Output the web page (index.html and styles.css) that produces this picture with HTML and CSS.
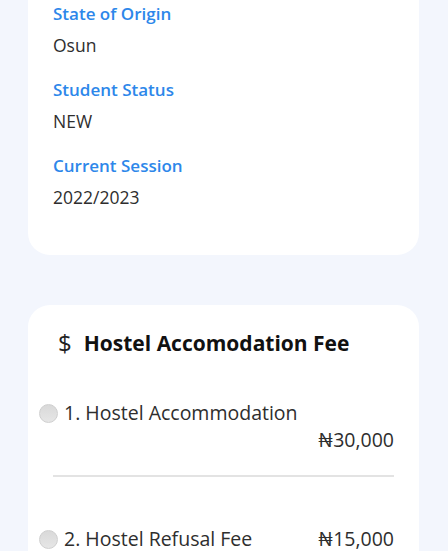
FILE: index.html
```html
<!DOCTYPE html>
<html lang="en">
<head>
    <meta charset="UTF-8">
    <meta name="viewport" content="width=device-width, initial-scale=1.0">
    <title>Student Profile</title>
    <link rel="stylesheet" href="styles.css">
</head>
<body>
    <div class="page">
        <div class="card info-card">
            <div class="field">
                <div class="label">State of Origin</div>
                <div class="value">Osun</div>
            </div>
            <div class="field">
                <div class="label">Student Status</div>
                <div class="value">NEW</div>
            </div>
            <div class="field">
                <div class="label">Current Session</div>
                <div class="value">2022/2023</div>
            </div>
        </div>

        <div class="card fee-card">
            <div class="fee-title">
                <span class="dollar">$</span>
                <span>Hostel Accomodation Fee</span>
            </div>

            <label class="fee-item wrap">
                <span class="radio"></span>
                <span class="fee-name">1. Hostel Accommodation</span>
                <span class="fee-price">₦30,000</span>
            </label>

            <div class="divider"></div>

            <label class="fee-item">
                <span class="radio"></span>
                <span class="fee-name">2. Hostel Refusal Fee</span>
                <span class="fee-price">₦15,000</span>
            </label>
        </div>
    </div>
</body>
</html>
```

FILE: styles.css
```css
:root {
    --bg-color: #f3f6fd;
    --card-color: #ffffff;
    --label-color: #2d87ea;
    --text-color: #2e2e2e;
}

* {
    margin: 0;
    padding: 0;
    box-sizing: border-box;
}

body {
    font-family: "Open Sans", "Lato", sans-serif;
    background-color: var(--bg-color);
    color: var(--text-color);
    min-height: 100vh;
}

.page {
    padding: 0 29px 0 28px;
}

.card {
    background-color: var(--card-color);
    border-radius: 22px;
}

/* first card is scrolled, its top is off screen */
.info-card {
    border-radius: 0 0 22px 22px;
    padding: 2px 25px 46px;
}

.field + .field {
    margin-top: 21px;
}

.label {
    font-size: 17px;
    font-weight: 600;
    color: var(--label-color);
    line-height: 24px;
}

.value {
    font-size: 17.5px;
    line-height: 24px;
    margin-top: 7px;
}

.fee-card {
    margin-top: 50px;
    padding: 23px 25px 20px;
}

.fee-title {
    display: flex;
    align-items: center;
    gap: 12px;
    font-size: 21px;
    font-weight: bold;
    color: #111111;
    padding-left: 5px;
    line-height: 30px;
}

.dollar {
    font-weight: normal;
    font-size: 24px;
    color: #222222;
}

.fee-item {
    display: flex;
    align-items: center;
    font-size: 19.5px;
    margin-left: -14px;
    line-height: 26px;
    margin-top: 49px;
}

.fee-item.wrap {
    flex-wrap: wrap;
    margin-top: 42px;
}

.fee-item.wrap .fee-price {
    width: 100%;
    text-align: right;
    margin-top: 1px;
}

.radio {
    width: 19px;
    height: 19px;
    border-radius: 50%;
    background: linear-gradient(#d9d9d9, #e6e6e6);
    border: 1px solid #cfcfcf;
    margin-right: 6px;
    flex-shrink: 0;
}

.fee-name {
    flex: 1;
}

.fee-price {
    text-align: right;
}

.divider {
    height: 2px;
    background-color: #e3e3e3;
    margin-top: 22px;
}
```
